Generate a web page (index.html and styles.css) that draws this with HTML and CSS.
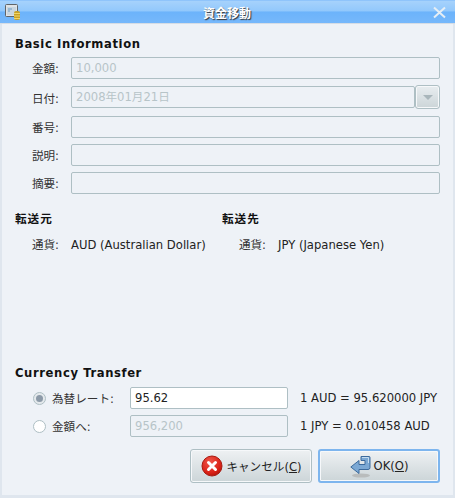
FILE: index.html
```html
<!DOCTYPE html>
<html lang="ja">
<head>
<meta charset="utf-8">
<title>資金移動</title>
<link rel="stylesheet" href="styles.css">
</head>
<body>
<div class="window">
  <header class="titlebar">
    <svg class="app-icon" width="16" height="16" viewBox="0 0 16 16">
      <rect x="0.5" y="0.5" width="12" height="12" rx="1" fill="#dfe3e6" stroke="#5f6468"/>
      <rect x="2" y="3" width="9" height="8" fill="#c9d6e0"/>
      <path d="M3 5h4M3 7h2" stroke="#6d9cc4" stroke-width="1"/>
      <rect x="9" y="7" width="6" height="9" rx="2" fill="#c9a227"/>
      <path d="M9 9.500h6M9 12h6M9 14.500h6" stroke="#f0d66a" stroke-width="1"/>
    </svg>
    <span class="title">資金移動</span>
    <svg class="close" width="13" height="13" viewBox="0 0 13 13">
      <path d="M1 1.500L12 11.500M12 1.500L1 11.500" stroke="#e6eef5" stroke-width="2"/>
    </svg>
  </header>
  <main class="body">
    <h2 class="heading">Basic Information</h2>
    <div class="form">
      <label class="lab">金額:</label>
      <div class="entry dis">10,000</div>
      <label class="lab">日付:</label>
      <div class="date-row">
        <div class="entry dis grow">2008年01月21日</div>
        <div class="drop"><span class="arrow"></span></div>
      </div>
      <label class="lab">番号:</label>
      <div class="entry"></div>
      <label class="lab">説明:</label>
      <div class="entry"></div>
      <label class="lab">摘要:</label>
      <div class="entry"></div>
    </div>
    <div class="accounts">
      <section class="acct from">
        <h3 class="subhead">転送元</h3>
        <div class="acct-row"><span class="lab">通貨:</span><span>AUD (Australian Dollar)</span></div>
      </section>
      <section class="acct">
        <h3 class="subhead">転送先</h3>
        <div class="acct-row"><span class="lab">通貨:</span><span>JPY (Japanese Yen)</span></div>
      </section>
    </div>
    <div class="spacer"></div>
    <h2 class="heading">Currency Transfer</h2>
    <div class="transfer">
      <span class="radio-cell"><span class="radio checked"></span><span>為替レート:</span></span>
      <div class="entry live">95.62</div>
      <span class="rate">1 AUD = 95.620000 JPY</span>
      <span class="radio-cell"><span class="radio"></span><span>金額へ:</span></span>
      <div class="entry dis">956,200</div>
      <span class="rate">1 JPY = 0.010458 AUD</span>
    </div>
    <div class="actions">
      <button class="btn">
        <svg width="24" height="24" viewBox="0 0 24 24">
          <defs>
            <radialGradient id="red" cx="0.4" cy="0.3" r="0.8"><stop offset="0" stop-color="#f0584c"/><stop offset="0.7" stop-color="#d81f14"/><stop offset="1" stop-color="#9c0f08"/></radialGradient>
          </defs>
          <circle cx="12" cy="12" r="10" fill="url(#red)" stroke="#a81a10"/>
          <path d="M8.500 8.500L15.500 15.500M15.500 8.500L8.500 15.500" stroke="#fff" stroke-width="3" stroke-linecap="round"/>
        </svg>
        <span>キャンセル(<u>C</u>)</span>
      </button>
      <button class="btn default">
        <svg width="22" height="24" viewBox="0 0 22 24">
          <ellipse cx="11" cy="21.500" rx="9" ry="2" fill="#b9bcbc"/>
          <path d="M11 2.500h8a1 1 0 0 1 1 1v10a2 2 0 0 1-2 2H9v4L0.800 13 9 6.500v4h6V6.500h-4z" fill="#7ba8d4" stroke="#3c6a9c"/>
          <path d="M12 3.500h6.500V9" fill="none" stroke="#c4dcf0"/>
        </svg>
        <span>OK(<u>O</u>)</span>
      </button>
    </div>
  </main>
</div>
</body>
</html>
```
FILE: styles.css
```css
* { box-sizing: border-box; }
html, body { margin: 0; padding: 0; }
body {
  width: 455px;
  height: 498px;
  overflow: hidden;
  font-family: "DejaVu Sans", "Noto Sans CJK JP", sans-serif;
  font-size: 11.6px;
  color: #222;
}
.window {
  width: 455px;
  height: 498px;
  display: flex;
  flex-direction: column;
  background: #dfe6ee;
  padding: 0 2px 3px;
}
.titlebar {
  height: 24px;
  margin: 0 -2px;
  padding: 0 9px 0 5px;
  flex: none;
  display: flex;
  align-items: center;
  justify-content: space-between;
  border-top: 1px solid #8fc4fb;
  border-bottom: 1px solid #d6dde5;
  background: linear-gradient(#a6d2fc 0%, #92c8fc 45%, #6cb3fb 50%, #76b8fb 100%);
}
.title {
  color: #fff;
  font-size: 12px;
  font-weight: bold;
  text-shadow: 1px 1px 1px #333;
}
.body {
  flex: 1;
  display: flex;
  flex-direction: column;
  background: #eef2f7;
  padding: 13px 13px 12px;
}
.heading {
  margin: 0;
  font-size: 11.6px;
  line-height: 14px;
  font-weight: bold;
  letter-spacing: 0.6px;
  color: #111;
}
.form {
  margin-top: 6px;
  display: grid;
  grid-template-columns: 44px 1fr;
  column-gap: 12px;
  row-gap: 6px;
  align-items: center;
}
.lab { justify-self: end; text-align: right; color: #333; }
.entry {
  height: 22px;
  padding: 0 4px;
  line-height: 20px;
  border: 1px solid #aebfc4;
  border-radius: 2px;
  background: #eef2f7;
}
.dis { color: #b7c4c8; }
.live { background: #fff; color: #222; }
.grow { flex: 1; }
.date-row { display: flex; align-items: center; height: 24px; margin-bottom: 1px; }
.drop {
  width: 25px;
  height: 24px;
  display: flex;
  align-items: center;
  justify-content: center;
  border: 1px solid #aebfc4;
  border-radius: 3px;
  box-shadow: inset 0 0 0 1px #f6f8fa;
  background: linear-gradient(#e8edf0, #ccd5d8);
}
.arrow {
  width: 0;
  height: 0;
  border-left: 5px solid transparent;
  border-right: 5px solid transparent;
  border-top: 5px solid #a9b6bb;
}
.accounts { margin-top: 18px; display: flex; }
.acct { flex: none; width: 207px; }
.subhead {
  margin: 0;
  font-size: 11.6px;
  line-height: 15px;
  font-weight: bold;
  letter-spacing: 1px;
  color: #111;
}
.acct-row { margin-top: 11px; display: flex; gap: 12px; line-height: 15px; }
.acct-row .lab { width: 44px; }
.spacer { flex: 1; }
.transfer {
  margin-top: 7px;
  display: grid;
  grid-template-columns: 85px 158px auto;
  column-gap: 12px;
  row-gap: 6px;
  align-items: center;
  justify-content: start;
  padding-left: 18px;
}
.radio-cell { display: flex; align-items: center; gap: 6px; white-space: nowrap; color: #333; }
.radio {
  width: 13px;
  height: 13px;
  border: 1px solid #aebfc4;
  border-radius: 50%;
  background: #fff;
  flex: none;
  display: flex;
  align-items: center;
  justify-content: center;
}
.checked { background: #e4e9ec; }
.checked::after {
  content: "";
  width: 7px;
  height: 7px;
  border-radius: 50%;
  background: #8c9aa8;
}
.rate { white-space: nowrap; }
.actions {
  margin-top: 12px;
  display: flex;
  justify-content: flex-end;
  gap: 6px;
}
.btn {
  width: 122px;
  height: 34px;
  padding: 0;
  display: flex;
  align-items: center;
  justify-content: center;
  gap: 2px;
  font: inherit;
  color: #222;
  border: 1px solid #aebfc4;
  border-radius: 3px;
  box-shadow: inset 0 0 0 1px #f6f8fa;
  background: linear-gradient(#eef1f3, #ccd5d8);
}
.default {
  border: 2px solid #7db5ee;
}
```
